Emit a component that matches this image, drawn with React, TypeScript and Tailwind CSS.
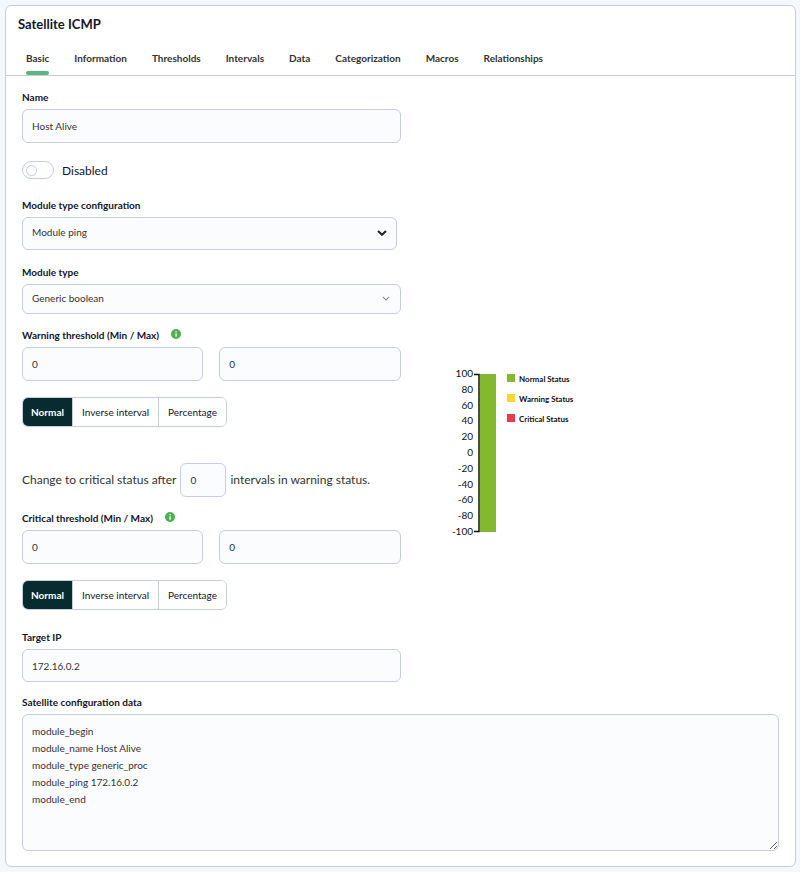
import { useState } from "react";
import type { ReactNode } from "react";

const tabs = [
  "Basic",
  "Information",
  "Thresholds",
  "Intervals",
  "Data",
  "Categorization",
  "Macros",
  "Relationships",
];

const fieldBox =
  "block w-full rounded-md border border-[#c5cee0] bg-[#fbfcfe] px-[9px] text-[10px] text-[#333333] outline-none";

const configText = `module_begin
module_name Host Alive
module_type generic_proc
module_ping 172.16.0.2
module_end`;

function Label({ htmlFor, children }: { htmlFor: string; children: ReactNode }) {
  return (
    <label htmlFor={htmlFor} className="text-[10px] leading-4 font-bold text-[#14142b]">
      {children}
    </label>
  );
}

function InfoIcon() {
  return (
    <svg viewBox="0 0 10 10" className="mt-[2px] h-[10px] w-[10px]" role="img" aria-label="Help">
      <circle cx="5" cy="5" r="5" fill="#4caf50" />
      <path d="M4.4 2h1.3v1.3H4.4zM4.4 4.3h1.3v3.5H4.4z" fill="#fff" />
    </svg>
  );
}

function Chevron({ className }: { className: string }) {
  return (
    <svg viewBox="0 0 10 6" fill="none" stroke="currentColor" aria-hidden="true" className={className}>
      <path d="M1 1 5 4.8 9 1" />
    </svg>
  );
}

function Segmented({ label }: { label: string }) {
  const [active, setActive] = useState("Normal");
  return (
    <div
      role="group"
      aria-label={label}
      className="mt-4 flex h-[30px] w-fit divide-x divide-[#c5cee0] overflow-hidden rounded-md border border-[#c5cee0] text-[10px]"
    >
      {["Normal", "Inverse interval", "Percentage"].map((item) => (
        <button
          key={item}
          type="button"
          aria-pressed={active === item}
          onClick={() => setActive(item)}
          className={
            active === item
              ? "bg-[#082b30] px-2 font-bold text-white"
              : "bg-white px-[9px] text-[#14142b]"
          }
        >
          {item}
        </button>
      ))}
    </div>
  );
}

function Threshold({ id, title }: { id: string; title: string }) {
  return (
    <>
      <div className="flex gap-3">
        <Label htmlFor={`${id}-min`}>{title} (Min / Max)</Label>
        <InfoIcon />
      </div>
      <div className="mt-1 grid grid-cols-2 gap-4">
        <input id={`${id}-min`} defaultValue="0" className={`${fieldBox} h-[34px]`} />
        <input aria-label={`${title} max`} defaultValue="0" className={`${fieldBox} h-[34px]`} />
      </div>
      <Segmented label={`${title} mode`} />
    </>
  );
}

const ticks = [100, 80, 60, 40, 20, 0, -20, -40, -60, -80, -100];
const legend = [
  { name: "Normal Status", color: "#82b92e" },
  { name: "Warning Status", color: "#ffd731" },
  { name: "Critical Status", color: "#e63c52" },
];

function StatusChart() {
  return (
    <svg width="130" height="172" role="img" aria-label="Status thresholds" className="block">
      {ticks.map((tick, i) => (
        <text key={tick} x="23" y={10 + i * 15.8} textAnchor="end" fontSize="10" fill="#111">
          {tick}
        </text>
      ))}
      <rect x="30" y="7" width="16" height="158" fill="#82b92e" />
      <path d="M24 7.5h5v157h-5" fill="none" stroke="#111" strokeWidth="1.5" />
      {legend.map((entry, i) => (
        <g key={entry.name}>
          <rect x="57" y={7 + i * 20} width="8" height="8" fill={entry.color} />
          <text x="69" y={15 + i * 20} fontSize="8" fontWeight="700" fill="#111">
            {entry.name}
          </text>
        </g>
      ))}
    </svg>
  );
}

export default function App() {
  const [current, setCurrent] = useState("Basic");
  return (
    <div className="min-h-screen bg-[#f4f7fc] px-[5px] pt-[5px] pb-[5px] font-[Lato,sans-serif] sm:pr-1">
      <main className="rounded-md border border-[#c5cee0] bg-white">
        <h1 className="px-3 pt-2 text-[13px] leading-5 font-bold text-[#14142b]">Satellite ICMP</h1>
        <nav className="mt-[14px] flex gap-[25px] border-b border-[#c5cee0] px-5">
          {tabs.map((tab) => (
            <button
              key={tab}
              type="button"
              onClick={() => setCurrent(tab)}
              className="text-[10px] font-bold text-[#333333]"
            >
              <span className="block h-[23px] leading-[21px]">{tab}</span>
              <span className={current === tab ? "block h-1 rounded-full bg-[#5cb57f]" : "block h-1"} />
            </button>
          ))}
        </nav>

        <form className="px-4 pt-[13px] pb-[15px]">
          <div className="flex w-1/2 flex-col">
            <Label htmlFor="name">Name</Label>
            <input id="name" defaultValue="Host Alive" className={`${fieldBox} mt-1 h-[34px]`} />

            <div className="mt-[18px] flex h-[18px] items-center gap-2">
              <input
                id="disabled"
                type="checkbox"
                className="flex h-[18px] w-8 appearance-none items-center rounded-full border border-[#c5cee0] bg-white px-[3px] before:block before:h-[11px] before:w-[11px] before:rounded-full before:border before:border-[#c5cee0] checked:justify-end"
              />
              <label htmlFor="disabled" className="pt-px text-xs text-[#14142b]">
                Disabled
              </label>
            </div>

            <div className="mt-[18px] flex flex-col pr-1">
              <Label htmlFor="configuration">Module type configuration</Label>
              <div className="relative mt-1">
                <select id="configuration" className={`${fieldBox} h-[33px] appearance-none pb-[2px]`}>
                  <option>Module ping</option>
                </select>
                <Chevron className="pointer-events-none absolute top-[13px] right-[10px] h-[6px] w-[10px] stroke-2 text-[#222222]" />
              </div>
            </div>

            <div className="mt-[14px] flex flex-col">
              <Label htmlFor="type">Module type</Label>
              <div className="relative mt-1">
                <select id="type" className={`${fieldBox} h-[30px] appearance-none pb-[2px]`}>
                  <option>Generic boolean</option>
                </select>
                <Chevron className="pointer-events-none absolute top-3 right-[11px] h-[5px] w-2 stroke-[1.5] text-[#8090b8]" />
              </div>
            </div>
          </div>

          <div className="mt-[13px] grid grid-cols-2">
            <div>
              <Threshold id="warning" title="Warning threshold" />
              <div className="mt-9 mb-[13px] flex items-center gap-1 text-xs whitespace-nowrap text-[#333333]">
                <label htmlFor="change">Change to critical status after</label>
                <div className="w-[46px]">
                  <input id="change" defaultValue="0" className={`${fieldBox} h-[34px]`} />
                </div>
                <span>intervals in warning status.</span>
              </div>
              <Threshold id="critical" title="Critical threshold" />
            </div>
            <div className="pt-10 pl-[49px]">
              <StatusChart />
            </div>
          </div>

          <div className="mt-[19px] flex w-1/2 flex-col">
            <Label htmlFor="target">Target IP</Label>
            <input id="target" defaultValue="172.16.0.2" className={`${fieldBox} mt-1 h-[33px]`} />
          </div>

          <div className="mt-3 flex flex-col">
            <Label htmlFor="data">Satellite configuration data</Label>
            <textarea
              id="data"
              defaultValue={configText}
              className={`${fieldBox} mt-1 h-[137px] resize py-2 leading-[17px]`}
            />
          </div>
        </form>
      </main>
    </div>
  );
}
